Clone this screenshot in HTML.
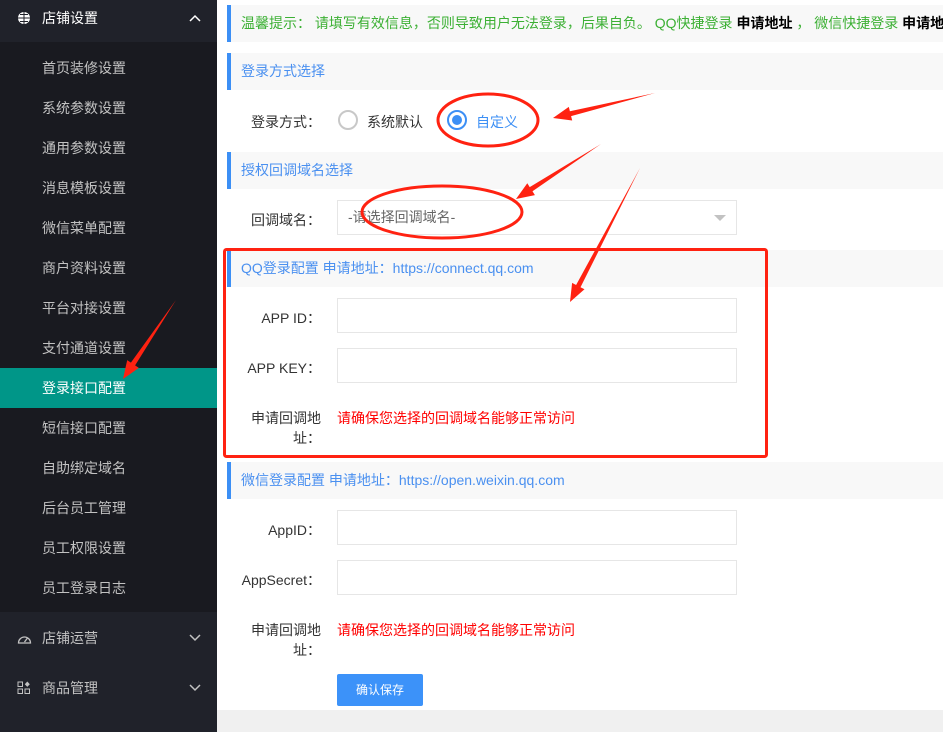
<!DOCTYPE html>
<html><head><meta charset="utf-8"><style>
*{margin:0;padding:0;box-sizing:border-box}
body{width:943px;height:732px;overflow:hidden;background:#f0f0f0;font-family:"Liberation Sans","Noto Sans CJK SC",sans-serif;font-size:14px;position:relative}
.side{position:absolute;left:0;top:0;width:217px;height:732px;background:#20222a;color:#c2c2c2}
.sub{position:absolute;top:42px;left:0;width:217px;height:570px;background:#191a20}
.it{position:absolute;left:42px;height:40px;line-height:40px;width:175px}
.top{position:absolute;left:0;width:217px;height:50px;line-height:36px}
.top span{position:absolute;left:42px}
.main{position:absolute;left:217px;top:0;width:726px;height:710px;background:#fff}
.bar{position:absolute;left:10px;width:716px;height:37px;background:#f8f8f8;border-left:4px solid #3c8ff5;color:#4a90f0;line-height:37px;padding-left:10px}
.lab{position:absolute;width:104px;text-align:right;color:#333}
.inp{position:absolute;left:120px;width:400px;height:35px;border:1px solid #e6e6e6;background:#fff}
.red{position:absolute;left:120px;color:#f00}
</style></head><body>
<div class="side">
 <div class="top" style="top:0;height:42px;line-height:36px;color:#fff"><svg style="position:absolute;left:17px;top:11px" width="14" height="14" viewBox="0 0 14 14"><circle cx="7" cy="7" r="6" fill="#fff"/><path d="M1 7h12M7 1v12M3 3.5h8M3 10.5h8" stroke="#20222a" stroke-width="1"/></svg><span>店铺设置</span><svg style="position:absolute;left:189px;top:14px" width="12" height="8"><path d="M1 7l5-5 5 5" stroke="#fff" stroke-width="1.5" fill="none"/></svg></div>
 <div class="sub">
  <div class="it" style="top:6px">首页装修设置</div>
  <div class="it" style="top:46px">系统参数设置</div>
  <div class="it" style="top:86px">通用参数设置</div>
  <div class="it" style="top:126px">消息模板设置</div>
  <div class="it" style="top:166px">微信菜单配置</div>
  <div class="it" style="top:206px">商户资料设置</div>
  <div class="it" style="top:246px">平台对接设置</div>
  <div class="it" style="top:286px">支付通道设置</div>
  <div style="position:absolute;top:326px;left:0;width:217px;height:40px;background:#009688"></div>
  <div class="it" style="top:326px;color:#fff">登录接口配置</div>
  <div class="it" style="top:366px">短信接口配置</div>
  <div class="it" style="top:406px">自助绑定域名</div>
  <div class="it" style="top:446px">后台员工管理</div>
  <div class="it" style="top:486px">员工权限设置</div>
  <div class="it" style="top:526px">员工登录日志</div>
 </div>
 <div class="top" style="top:620px"><svg style="position:absolute;left:17px;top:11px" width="15" height="14"><path d="M1.5 12a6 6 0 1 1 12 0z" stroke="#c2c2c2" stroke-width="1.3" fill="none"/><path d="M7.5 11l3-4" stroke="#c2c2c2" stroke-width="1.3"/></svg><span>店铺运营</span><svg style="position:absolute;left:189px;top:14px" width="12" height="8"><path d="M1 1l5 5 5-5" stroke="#c2c2c2" stroke-width="1.5" fill="none"/></svg></div>
 <div class="top" style="top:670px"><svg style="position:absolute;left:17px;top:11px" width="14" height="14"><rect x="1" y="1" width="4.5" height="4.5" stroke="#c2c2c2" fill="none"/><rect x="1" y="8" width="4.5" height="4.5" stroke="#c2c2c2" fill="none"/><rect x="8" y="8" width="4.5" height="4.5" stroke="#c2c2c2" fill="none"/><path d="M10.3 0.5l2.5 2.7-2.5 2.7-2.5-2.7z" fill="#c2c2c2"/></svg><span>商品管理</span><svg style="position:absolute;left:189px;top:14px" width="12" height="8"><path d="M1 1l5 5 5-5" stroke="#c2c2c2" stroke-width="1.5" fill="none"/></svg></div>
</div>
<div class="main">
 <div class="bar" style="top:5px;color:#3cb034;white-space:nowrap;overflow:hidden">温馨提示： 请填写有效信息，否则导致用户无法登录，后果自负。 QQ快捷登录 <b style="color:#000">申请地址</b> ， 微信快捷登录 <b style="color:#000">申请地址</b></div>
 <div class="bar" style="top:53px">登录方式选择</div>
 <div class="lab" style="top:112px">登录方式：</div>
 <div style="position:absolute;left:121px;top:110px;width:20px;height:20px;border:2px solid #c8c8c8;border-radius:50%"></div>
 <div style="position:absolute;left:150px;top:112px;color:#333">系统默认</div>
 <div style="position:absolute;left:230px;top:110px;width:20px;height:20px;border:2px solid #3c8ff5;border-radius:50%"><div style="position:absolute;left:3px;top:3px;width:10px;height:10px;background:#3c8ff5;border-radius:50%"></div></div>
 <div style="position:absolute;left:259px;top:112px;color:#3c8ff5">自定义</div>
 <div class="bar" style="top:152px">授权回调域名选择</div>
 <div class="lab" style="top:210px">回调域名：</div>
 <div class="inp" style="top:200px;color:#666;padding-left:10px;line-height:33px">-请选择回调域名-<svg style="position:absolute;right:10px;top:14px" width="12" height="6"><path d="M0 0h12L6 6z" fill="#c2c2c2"/></svg></div>
 <div class="bar" style="top:250px">QQ登录配置 申请地址：https://connect.qq.com</div>
 <div class="lab" style="top:308px">APP ID：</div>
 <div class="inp" style="top:298px"></div>
 <div class="lab" style="top:358px">APP KEY：</div>
 <div class="inp" style="top:348px"></div>
 <div class="lab" style="top:408px;line-height:20px">申请回调地<br>址：</div>
 <div class="red" style="top:408px">请确保您选择的回调域名能够正常访问</div>
 <div class="bar" style="top:462px">微信登录配置 申请地址：https://open.weixin.qq.com</div>
 <div class="lab" style="top:520px">AppID：</div>
 <div class="inp" style="top:510px"></div>
 <div class="lab" style="top:570px">AppSecret：</div>
 <div class="inp" style="top:560px"></div>
 <div class="lab" style="top:620px;line-height:20px">申请回调地<br>址：</div>
 <div class="red" style="top:620px">请确保您选择的回调域名能够正常访问</div>
 <div style="position:absolute;left:120px;top:674px;width:86px;height:32px;background:#3c92f9;color:#fff;font-size:12px;text-align:center;line-height:32px;border-radius:2px">确认保存</div>
</div>
<svg style="position:absolute;left:0;top:0" width="943" height="732">
 <g stroke="#f21" fill="none" stroke-width="3">
  <rect x="224.5" y="249.5" width="542" height="207" rx="2"/>
  <ellipse cx="488" cy="120" rx="50" ry="26"/>
  <ellipse cx="442" cy="212" rx="80" ry="26"/>
 </g>
 <g fill="#f21">
  <path d="M655 93L569.9 111.3L568.8 106.9L553 118L572.2 120.5L571.1 116.1Z"/>
  <path d="M601 144L529.7 187.1L527.3 183.3L516 199L534.9 195.1L532.5 191.3Z"/>
  <path d="M640 168L576.1 285L572.1 282.9L570 302L584.5 289.3L580.5 287.3Z"/>
  <path d="M176 300L130.9 362.6L127.2 360.1L123 379L138.8 367.9L135.1 365.4Z"/>
 </g>
</svg>
</body></html>
